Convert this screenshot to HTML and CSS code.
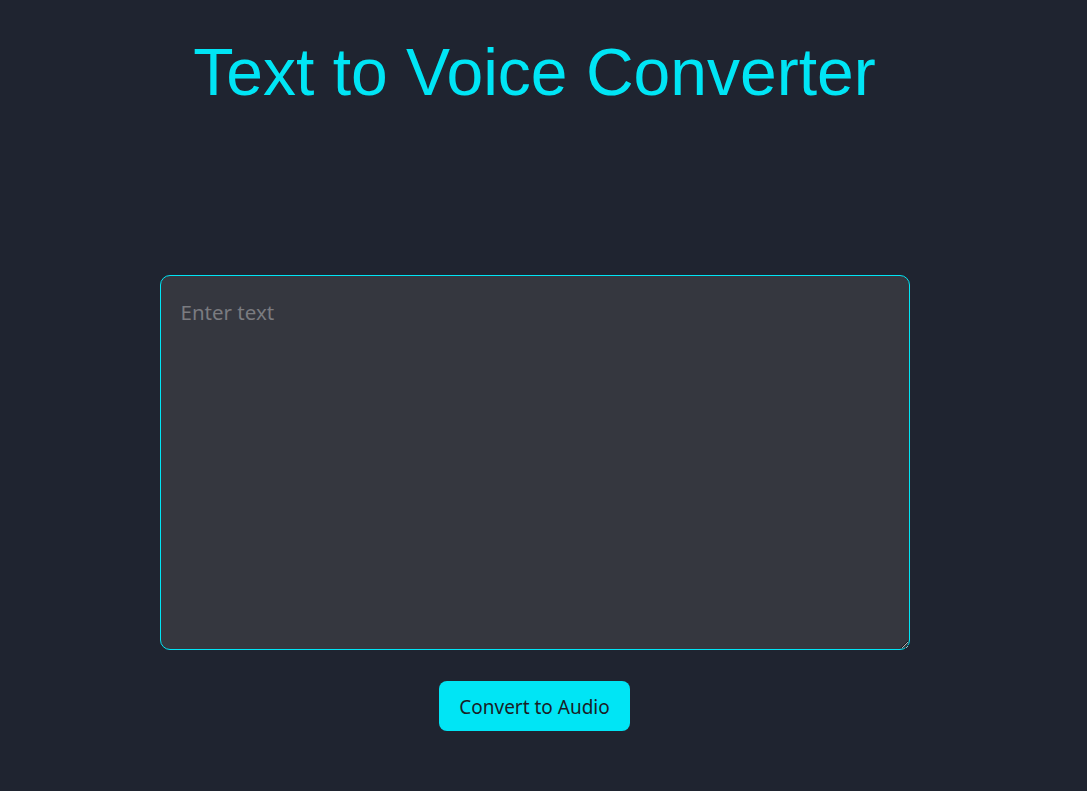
FILE: index.html
```html
<!DOCTYPE html>
<html lang="en">
<head>
<meta charset="utf-8">
<title>Text to Voice Converter</title>
<link rel="stylesheet" href="styles.css">
</head>
<body>
<main class="page">
  <h1 class="title">Text to Voice Converter</h1>
  <textarea class="input" placeholder="Enter text"></textarea>
  <button class="convert">Convert to Audio</button>
</main>
</body>
</html>
```
FILE: styles.css
```css
html, body {
  margin: 0;
  padding: 0;
  background: #1f2430;
  height: 100%;
}
.page {
  display: flex;
  flex-direction: column;
  align-items: center;
  padding-top: 35px;
  padding-right: 18px;
}
.title {
  margin: 0;
  font-family: "Liberation Sans", Arial, sans-serif;
  font-weight: 400;
  font-size: 66px;
  line-height: 1.15;
  color: #00e5f5;
}
.input {
  box-sizing: border-box;
  margin-top: 164px;
  width: 750px;
  height: 375px;
  padding: 22px 20px;
  background: #35373f;
  border: 1px solid #00e5f5;
  border-radius: 10px;
  color: #ddd;
  font-family: "Noto Sans", "Open Sans", sans-serif;
  font-size: 20.5px;
  outline: none;
  resize: both;
}
.input::placeholder {
  color: #7a7b80;
}
.convert {
  margin-top: 31px;
  width: 191px;
  height: 50px;
  padding: 2px 0 0;
  border: none;
  border-radius: 8px;
  background: #00e5f5;
  color: #1a1d26;
  font-family: "Noto Sans", "Open Sans", sans-serif;
  font-size: 19px;
  cursor: pointer;
}
```
